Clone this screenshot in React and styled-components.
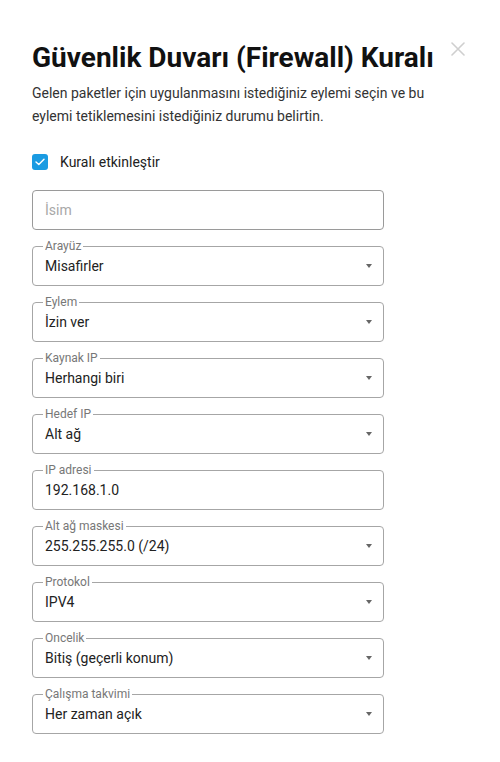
import React from "react";
import styled, { createGlobalStyle } from "styled-components";

const Global = createGlobalStyle`
  html, body { margin: 0; padding: 0; background: #fff; }
  body { font-family: Roboto, "Noto Sans", Arial, sans-serif; color: #222; }
  * { box-sizing: border-box; }
`;

const Dialog = styled.div`
  position: relative;
  width: 500px;
  min-height: 762px;
  padding: 42px 32px 28px 32px;
  background: #fff;
`;

const Close = styled.button`
  position: absolute;
  top: 41px;
  right: 34px;
  width: 16px;
  height: 16px;
  padding: 0;
  border: 0;
  background: transparent;
  cursor: pointer;
  display: flex;
  align-items: center;
  justify-content: center;
`;

const Title = styled.h1`
  margin: 0;
  font-size: 28px;
  line-height: 31px;
  font-weight: 700;
  color: #111;
  white-space: nowrap;
`;

const Description = styled.p`
  margin: 9px 0 0 0;
  font-size: 14px;
  line-height: 23px;
  color: #333;
  max-width: 400px;
`;

const CheckRow = styled.label`
  display: flex;
  align-items: center;
  gap: 12px;
  margin-top: 26px;
  height: 16px;
  font-size: 14px;
  color: #222;
`;

const CheckBox = styled.span`
  width: 16px;
  height: 16px;
  border-radius: 3px;
  background: ${(p) => (p.$checked ? "#1a9be2" : "#fff")};
  display: flex;
  align-items: center;
  justify-content: center;
`;

const Fields = styled.div`
  display: flex;
  flex-direction: column;
  gap: 16px;
  margin-top: 20px;
  width: 352px;
`;

const Field = styled.div`
  position: relative;
  height: 40px;
  border: 1px solid ${(p) => (p.$plain ? "#9a9a9a" : "#a6a6a6")};
  border-radius: 4px;
  display: flex;
  align-items: center;
  padding: 0 11px 1px 12px;
  background: #fff;
`;

const Legend = styled.span`
  position: absolute;
  top: -8px;
  left: 10px;
  padding: 0 2px;
  background: #fff;
  font-size: 12px;
  line-height: 14px;
  color: #777;
  white-space: nowrap;
`;

const Value = styled.span`
  flex: 1;
  font-size: 14px;
  color: ${(p) => (p.$placeholder ? "#a8a8a8" : "#222")};
`;

const Caret = styled.span`
  width: 0;
  height: 0;
  border-left: 3px solid transparent;
  border-right: 3px solid transparent;
  border-top: 4px solid #666;
`;

const selects = [
  ["Arayüz", "Misafirler"],
  ["Eylem", "İzin ver"],
  ["Kaynak IP", "Herhangi biri"],
  ["Hedef IP", "Alt ağ"],
  ["IP adresi", "192.168.1.0", true],
  ["Alt ağ maskesi", "255.255.255.0 (/24)"],
  ["Protokol", "IPV4"],
  ["Oncelik", "Bitiş (geçerli konum)"],
  ["Çalışma takvimi", "Her zaman açık"],
];

export default function App() {
  return (
    <>
      <Global />
      <Dialog>
        <Close aria-label="Kapat">
          <svg width="14" height="14" viewBox="0 0 14 14">
            <path d="M1 1 L13 13 M13 1 L1 13" stroke="#cfcfcf" strokeWidth="1.6" strokeLinecap="round" />
          </svg>
        </Close>
        <Title>Güvenlik Duvarı (Firewall) Kuralı</Title>
        <Description>
          Gelen paketler için uygulanmasını istediğiniz eylemi seçin ve bu eylemi tetiklemesini istediğiniz durumu belirtin.
        </Description>
        <CheckRow>
          <CheckBox $checked>
            <svg width="10" height="8" viewBox="0 0 10 8">
              <path d="M1 4 L3.8 6.6 L9 1.2" fill="none" stroke="#fff" strokeWidth="1.4" strokeLinecap="round" strokeLinejoin="round" />
            </svg>
          </CheckBox>
          Kuralı etkinleştir
        </CheckRow>
        <Fields>
          <Field $plain>
            <Value $placeholder>İsim</Value>
          </Field>
          {selects.map(([label, value, input]) => (
            <Field key={label}>
              <Legend>{label}</Legend>
              <Value>{value}</Value>
              {!input && <Caret />}
            </Field>
          ))}
        </Fields>
      </Dialog>
    </>
  );
}
